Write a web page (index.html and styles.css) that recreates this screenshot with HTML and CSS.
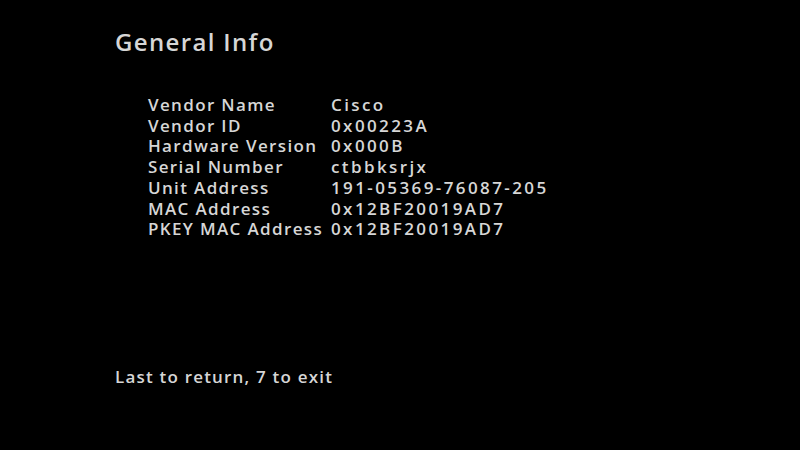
FILE: index.html
```html
<!DOCTYPE html>
<html>
<head>
<meta charset="utf-8">
<link rel="stylesheet" href="styles.css">
</head>
<body>
<div class="screen">
  <h1 class="title">General Info</h1>
  <div class="info">
    <div class="label">Vendor Name</div><div class="value">Cisco</div>
    <div class="label">Vendor ID</div><div class="value">0x00223A</div>
    <div class="label">Hardware Version</div><div class="value">0x000B</div>
    <div class="label">Serial Number</div><div class="value">ctbbksrjx</div>
    <div class="label">Unit Address</div><div class="value">191-05369-76087-205</div>
    <div class="label">MAC Address</div><div class="value">0x12BF20019AD7</div>
    <div class="label">PKEY MAC Address</div><div class="value">0x12BF20019AD7</div>
  </div>
  <div class="spacer"></div>
  <div class="footer">Last to return, 7 to exit</div>
</div>
</body>
</html>
```
FILE: styles.css
```css
html, body {
  margin: 0;
  padding: 0;
  background: #000;
}
.screen {
  width: 800px;
  height: 450px;
  box-sizing: border-box;
  padding: 28px 0 0 115px;
  display: flex;
  flex-direction: column;
  font-family: "Open Sans", sans-serif;
  font-weight: 600;
  color: #d6d6d6;
}
.title {
  margin: 0;
  font-size: 24px;
  font-weight: 600;
  line-height: 28px;
  letter-spacing: 1.35px;
}
.info {
  margin: 39px 0 0 33px;
  display: grid;
  grid-template-columns: 183px auto;
  justify-content: start;
  font-size: 17px;
  line-height: 20.7px;
  letter-spacing: 1.35px;
}
.label {
  white-space: nowrap;
}
.value {
  letter-spacing: 2.4px;
}
.spacer { flex: 1; }
.footer {
  font-size: 17px;
  line-height: 20px;
  margin-bottom: 63px;
  letter-spacing: 1.2px;
}
```
